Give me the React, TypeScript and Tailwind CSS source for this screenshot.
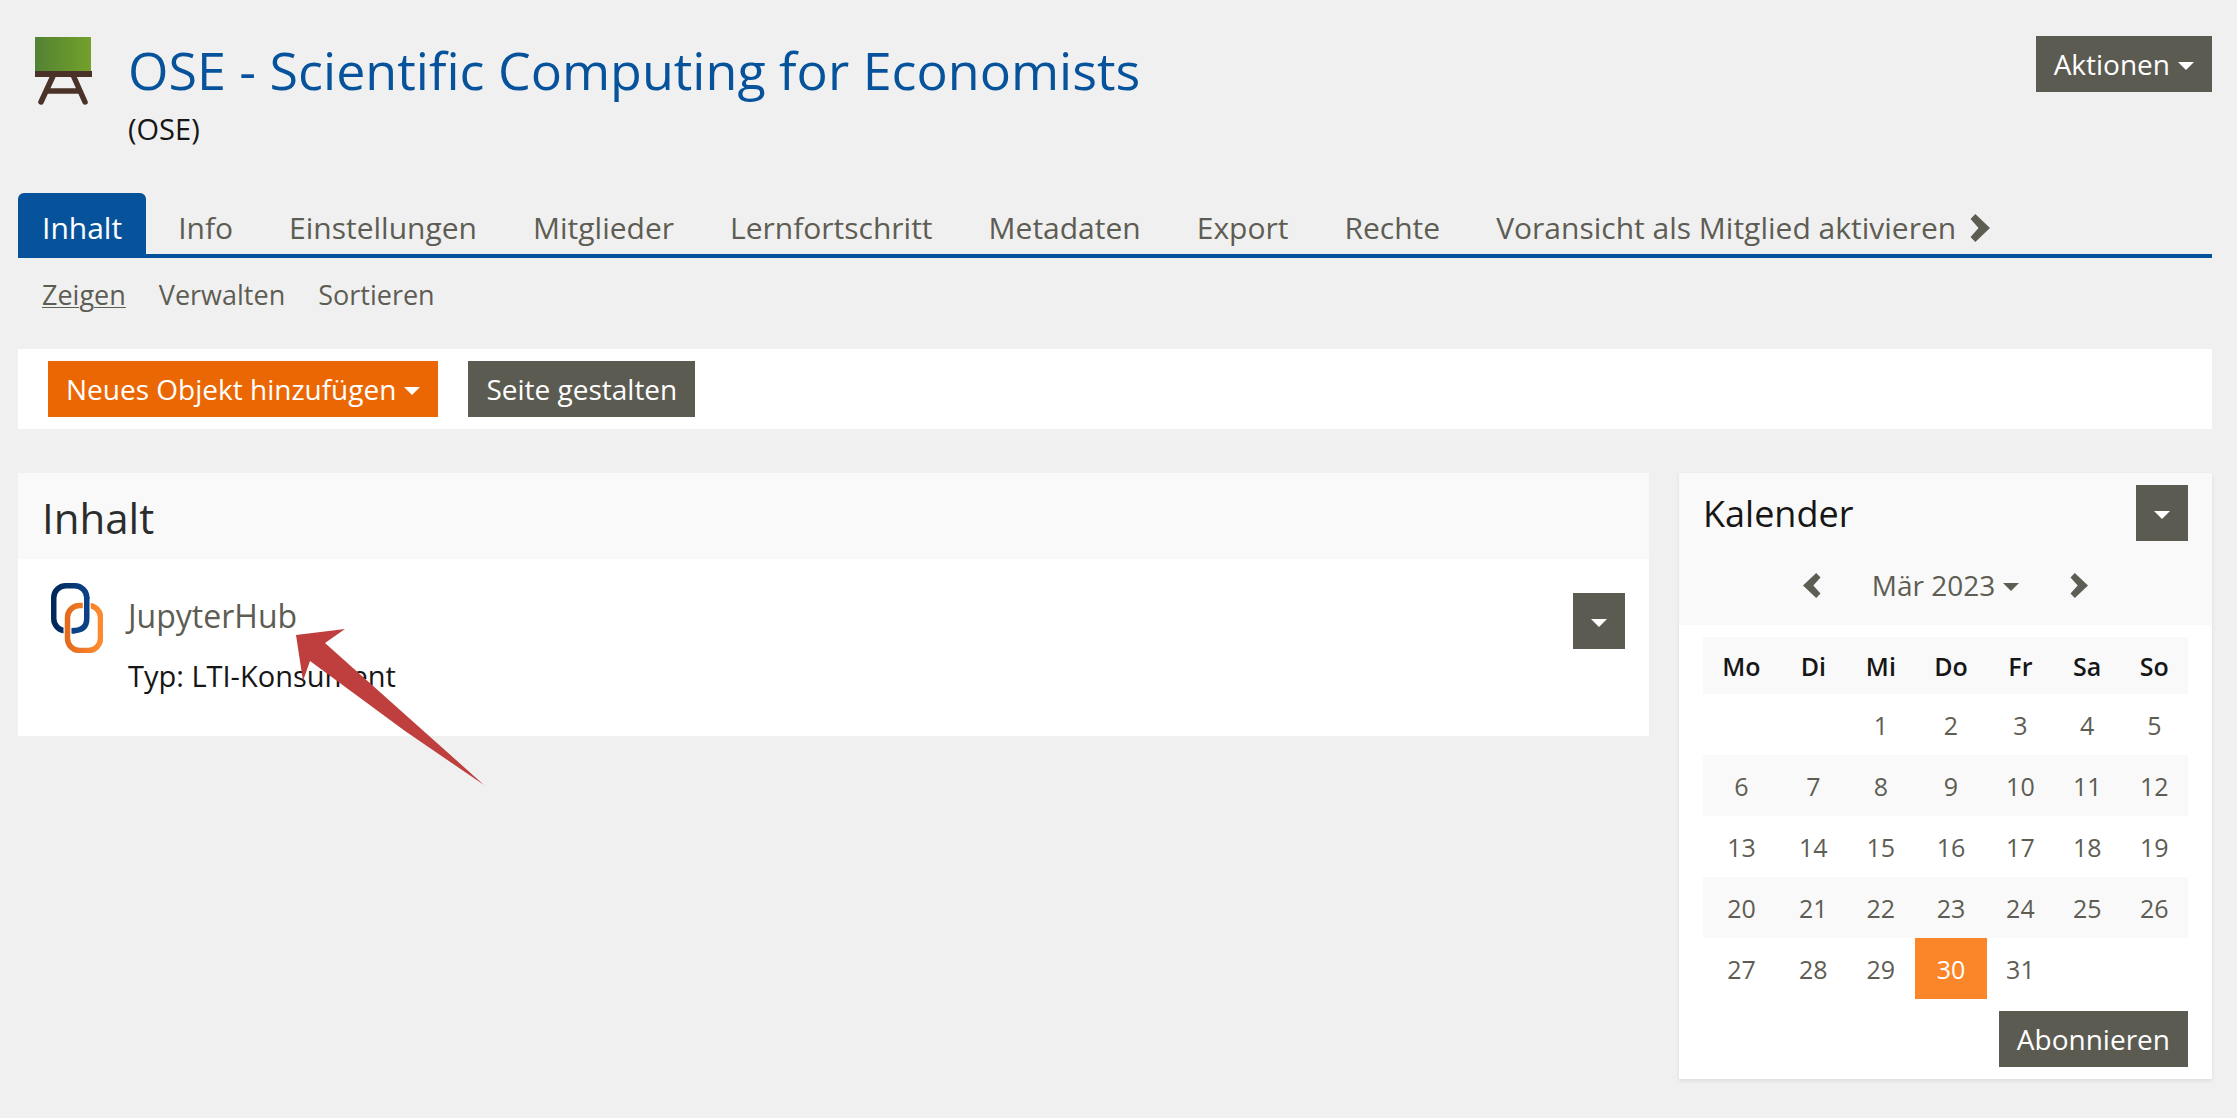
import React from "react";

const TABS = ["Info", "Einstellungen", "Mitglieder", "Lernfortschritt", "Metadaten", "Export", "Rechte"];
const WEEKDAYS = ["Mo", "Di", "Mi", "Do", "Fr", "Sa", "So"];
const WEEKS = [
  ["", "", "1", "2", "3", "4", "5"],
  ["6", "7", "8", "9", "10", "11", "12"],
  ["13", "14", "15", "16", "17", "18", "19"],
  ["20", "21", "22", "23", "24", "25", "26"],
  ["27", "28", "29", "30", "31", "", ""],
];

function Caret() {
  return (
    <svg viewBox="0 0 16 8" className="mt-1 h-2 w-4 shrink-0" fill="currentColor" aria-hidden="true">
      <path d="M0 0h16L8 8z" />
    </svg>
  );
}

function Chevron({ left = false, className }: { left?: boolean; className: string }) {
  return (
    <svg viewBox="0 0 18 25" className={className} fill="currentColor" aria-hidden="true">
      <path d={left ? "M13.200 0L17.500 4.500L10.300 12.500L17.500 20.500L13.200 25L0 12.500z" : "M4.800 0L.5 4.500L7.700 12.500L.5 20.500L4.800 25L18 12.500z"} />
    </svg>
  );
}

function CourseIcon() {
  return (
    <svg viewBox="0 0 58 70" className="mt-px h-[70px] w-[58px] shrink-0" aria-hidden="true">
      <defs>
        <linearGradient id="board" x1="0" x2="1" y1="0" y2="0">
          <stop offset="0" stopColor="#528234" />
          <stop offset="1" stopColor="#74a12a" />
        </linearGradient>
      </defs>
      <rect x="0" y="0" width="56" height="36" fill="url(#board)" />
      <path d="M18.500 38L6 65M38 38L50 65M12 54H44" fill="none" stroke="#4b3229" strokeWidth="5.500" strokeLinecap="round" />
      <rect x="0" y="34" width="57" height="6" fill="#4b3229" />
    </svg>
  );
}

function LinkIcon() {
  return (
    <svg viewBox="0 0 52 70" className="h-[70px] w-[52px] shrink-0" fill="none" aria-hidden="true">
      <defs>
        <linearGradient id="navy" x1="0" x2="1" y1="0" y2="0">
          <stop offset="0" stopColor="#00285a" />
          <stop offset="1" stopColor="#0b4186" />
        </linearGradient>
        <linearGradient id="amber" x1="0" x2="1" y1="0" y2="0">
          <stop offset="0" stopColor="#e36c1c" />
          <stop offset="1" stopColor="#fd8a30" />
        </linearGradient>
      </defs>
      <rect x="2.750" y="2.750" width="33" height="45" rx="12" stroke="url(#navy)" strokeWidth="5.500" />
      <path d="M16.500 53V34Q16.500 22.500 28 22.500" stroke="#fff" strokeWidth="8" />
      <path d="M28 22.500H37.500Q43 22.500 46 26" stroke="#fff" strokeWidth="8" />
      <rect x="16.500" y="22.500" width="33" height="45" rx="12" stroke="url(#amber)" strokeWidth="5.500" />
      <path d="M35.750 16V36Q35.750 47.750 24 47.750" stroke="#fff" strokeWidth="8" />
      <path d="M35.750 14V36Q35.750 47.750 21 47.750" stroke="#0b4186" strokeWidth="5.500" />
    </svg>
  );
}

export default function App() {
  return (
    <div className="min-h-screen bg-[#f0f0f0] pt-9 pr-[25px] pb-9 pl-[18px] font-['Open_Sans',sans-serif] text-[28px] leading-10 text-[#161616]">
      <header className="flex items-start justify-between">
        <div className="flex gap-[35px] pl-[17px]">
          <CourseIcon />
          <div>
            <h1 className="text-[52px] leading-[68px] text-[#06539c]">
              <a href="#kurs">OSE - Scientific Computing for Economists</a>
            </h1>
            <p className="mt-[5px] text-[29px]">(OSE)</p>
          </div>
        </div>
        <button className="flex h-14 items-center gap-2 bg-[#5b5b51] px-[18px] text-white">
          Aktionen
          <Caret />
        </button>
      </header>

      <nav aria-label="Reiter" className="mt-11 flex gap-2 border-b-4 border-[#06539c] text-[30px] text-[#5e5d53]">
        <a href="#inhalt" aria-current="page" className="rounded-t-md bg-[#06539c] px-6 pt-[15px] pb-[6px] text-white">
          Inhalt
        </a>
        {TABS.map((tab) => (
          <a key={tab} href={"#" + tab.toLowerCase()} className="px-6 pt-[15px] pb-[6px]">
            {tab}
          </a>
        ))}
        <a href="#voransicht" className="flex items-center gap-[14px] px-6 pt-[15px] pb-[6px]">
          Voransicht als Mitglied aktivieren
          <Chevron className="h-7 w-5 shrink-0" />
        </a>
      </nav>

      <nav aria-label="Unterreiter" className="mt-[17px] flex gap-[33px] px-6 text-[27px] text-[#5e5d53]">
        <a href="#zeigen" aria-current="page" className="underline decoration-1 underline-offset-2">
          Zeigen
        </a>
        <a href="#verwalten">Verwalten</a>
        <a href="#sortieren">Sortieren</a>
      </nav>

      <div className="mt-[34px] flex gap-[30px] bg-white px-[30px] py-3">
        <button className="flex h-14 items-center gap-2 bg-[#ea6703] px-[18px] text-white">
          Neues Objekt hinzufügen
          <Caret />
        </button>
        <button className="h-14 bg-[#5b5b51] px-[18px] text-white">Seite gestalten</button>
      </div>

      <div className="mt-11 flex items-start gap-[30px]">
        <main className="relative flex-1 bg-white">
          <h2 className="bg-[#f9f9f9] px-6 pt-[15px] pb-[11px] text-[42px] leading-[60px] text-[#2c2c2c]">Inhalt</h2>
          <div className="flex items-start pt-6 pr-6 pb-10 pl-[33px]">
            <LinkIcon />
            <div className="ml-[25px] flex-1 pt-2">
              <h3 className="text-[32px] leading-[50px] text-[#5e5d53]">
                <a href="#jupyterhub">JupyterHub</a>
              </h3>
              <p className="mt-[15px] text-[29px]">Typ: LTI-Konsument</p>
            </div>
            <button aria-label="Aktionen für JupyterHub" className="mt-[10px] flex h-14 items-center bg-[#5b5b51] px-[18px] text-white">
              <Caret />
            </button>
          </div>
          <svg viewBox="0 0 190 158" className="absolute top-[156px] left-[277px] h-[158px] w-[190px]" fill="#bf3f3e" aria-hidden="true">
            <path d="M1 6L50 0L30 14L189 156L110 102L15 32L8 52z" />
          </svg>
        </main>

        <aside className="w-[533px] bg-white shadow-[0_2px_4px_rgba(0,0,0,0.08)]">
          <div className="bg-[#f9f9f9] px-6 pt-3 pb-5">
            <div className="flex justify-between">
              <h2 className="text-[36px] leading-[58px]">Kalender</h2>
              <button aria-label="Aktionen für Kalender" className="flex h-14 items-center bg-[#5b5b51] px-[18px] text-white">
                <Caret />
              </button>
            </div>
            <div className="mt-[22px] flex items-center justify-center gap-[51px] text-[#5e5d53]">
              <button aria-label="Voriger Monat">
                <Chevron left className="h-[25px] w-[18px] shrink-0" />
              </button>
              <button className="flex items-center gap-2">
                Mär 2023
                <Caret />
              </button>
              <button aria-label="Nächster Monat">
                <Chevron className="h-[25px] w-[18px] shrink-0" />
              </button>
            </div>
          </div>
          <div className="px-6 py-3">
            <table className="w-full text-center text-[25px]">
              <thead>
                <tr className="h-[57px] bg-[#f9f9f9]">
                  {WEEKDAYS.map((d) => (
                    <th key={d} scope="col" className="px-[18px] font-semibold">
                      {d}
                    </th>
                  ))}
                </tr>
              </thead>
              <tbody className="text-[#5e5d53]">
                {WEEKS.map((week, i) => (
                  <tr key={i} className="h-[61px] even:bg-[#f9f9f9]">
                    {week.map((day, j) => (
                      <td key={j} className={day === "30" ? "bg-[#fb8529] px-[18px] text-white" : "px-[18px]"}>
                        {day && <a href={"#tag-" + day}>{day}</a>}
                      </td>
                    ))}
                  </tr>
                ))}
              </tbody>
            </table>
            <div className="mt-3 flex justify-end">
              <button className="h-14 bg-[#5b5b51] px-[18px] text-white">Abonnieren</button>
            </div>
          </div>
        </aside>
      </div>
    </div>
  );
}
